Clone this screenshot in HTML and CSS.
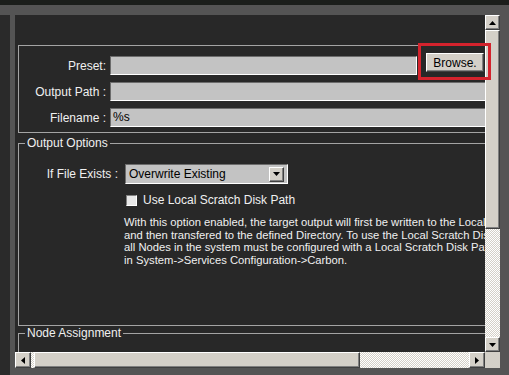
FILE: index.html
```html
<!DOCTYPE html>
<html lang="en">
<head>
    <meta charset="UTF-8">
    <title>Output Settings</title>
    <link rel="stylesheet" href="styles.css">
</head>
<body>
    <div class="topbar"></div>
    <div class="main">
        <div class="side"></div>
        <div class="view">
            <div class="content">
                <div class="group group-file">
                    <div class="row">
                        <label class="lbl">Preset:</label>
                        <div class="field field-preset"></div>
                        <button class="btn-browse">Browse.</button>
                    </div>
                    <div class="row">
                        <label class="lbl">Output Path :</label>
                        <div class="field"></div>
                    </div>
                    <div class="row">
                        <label class="lbl">Filename :</label>
                        <div class="field">%s</div>
                    </div>
                </div>

                <fieldset class="group group-options">
                    <legend>Output Options</legend>
                    <div class="row row-exists">
                        <label class="lbl lbl-wide">If File Exists :</label>
                        <div class="combo">
                            <span class="combo-text">Overwrite Existing</span>
                            <span class="combo-btn">
                                <svg width="7" height="4" viewBox="0 0 7 4"><polygon points="0,0 7,0 3.5,4" fill="#000"/></svg>
                            </span>
                        </div>
                    </div>
                    <div class="check-row">
                        <span class="check"></span>
                        <span>Use Local Scratch Disk Path</span>
                    </div>
                    <p class="note">
                        With this option enabled, the target output will first be written to the Local Disk<br>
                        and then transfered to the defined Directory. To use the Local Scratch Disk Path,<br>
                        all Nodes in the system must be configured with a Local Scratch Disk Path<br>
                        in System-&gt;Services Configuration-&gt;Carbon.
                    </p>
                </fieldset>

                <fieldset class="group group-nodes">
                    <legend>Node Assignment</legend>
                </fieldset>
            </div>

            <div class="vscroll">
                <div class="sb-btn">
                    <svg width="7" height="4" viewBox="0 0 7 4"><polygon points="3.5,0 7,4 0,4" fill="#000"/></svg>
                </div>
                <div class="sb-thumb vthumb"></div>
                <div class="sb-track"></div>
                <div class="sb-btn">
                    <svg width="7" height="4" viewBox="0 0 7 4"><polygon points="0,0 7,0 3.5,4" fill="#000"/></svg>
                </div>
            </div>
            <div class="hscroll">
                <div class="sb-btn hbtn">
                    <svg width="4" height="7" viewBox="0 0 4 7"><polygon points="4,0 4,7 0,3.5" fill="#000"/></svg>
                </div>
                <div class="sb-track hgap"></div>
                <div class="sb-thumb hthumb"></div>
                <div class="sb-track"></div>
                <div class="sb-btn hbtn">
                    <svg width="4" height="7" viewBox="0 0 4 7"><polygon points="0,0 4,3.5 0,7" fill="#000"/></svg>
                </div>
            </div>
            <div class="corner"></div>

            <div class="callout"></div>
        </div>
    </div>
</body>
</html>
```

FILE: styles.css
```css
body {
    margin: 0;
    background-color: #545454;
    font-family: "Liberation Sans", Arial, sans-serif;
    font-size: 12px;
    color: #f0f0f0;
    overflow: hidden;
}
.topbar {
    height: 5px;
    background-color: #1b1e1b;
}
.main {
    display: flex;
    padding-top: 10px;
}
.side {
    width: 10px;
    height: 360px;
    background-color: #2a2a2a;
}
.view {
    position: relative;
    margin-left: 5px;
    display: grid;
    grid-template-columns: 470px 15px;
    grid-template-rows: 337px 16px;
}
.content {
    background-color: #282828;
    overflow: hidden;
}

/* group boxes */
.group {
    width: 600px;
    margin: 0 0 0 3px;
    border: 1px solid #a4a4a4;
    box-sizing: border-box;
}
.group legend {
    margin-left: 6px;
    padding: 0 2px;
    line-height: 12px;
    font-size: 12px;
}
.group-file {
    margin-top: 30px;
    padding: 10px 0 5px 0;
}
.group-options {
    margin-top: 4px;
    padding: 0;
    height: 189px;
}
.group-nodes {
    margin-top: 1px;
    padding: 0;
    height: 60px;
}

.row {
    display: flex;
    align-items: center;
    height: 19px;
    margin-bottom: 7px;
}
.row:last-child {
    margin-bottom: 0;
}
.lbl {
    flex: none;
    width: 87px;
    margin-right: 4px;
    text-align: right;
    white-space: nowrap;
}
.lbl-wide {
    width: 99px;
    margin-right: 7px;
}
.field {
    flex: none;
    width: 480px;
    height: 19px;
    box-sizing: border-box;
    background-color: #c3c3c3;
    border-top: 1px solid #6c6c6c;
    border-left: 1px solid #6c6c6c;
    border-bottom: 1px solid #fff;
    border-right: 1px solid #fff;
    color: #000;
    padding-left: 2px;
    line-height: 17px;
}
.field-preset {
    width: 307px;
}
.btn-browse {
    flex: none;
    align-self: flex-start;
    margin: -3px 0 0 9px;
    width: 58px;
    height: 19px;
    padding: 0;
    background-color: #d4d0c8;
    border: 1px solid;
    border-color: #fff #404040 #404040 #fff;
    box-shadow: inset -1px -1px #808080;
    font-family: "Liberation Sans", Arial, sans-serif;
    font-size: 12px;
    color: #000;
}

/* output options */
.row-exists {
    height: 20px;
    margin: 15px 0 0 0;
}
.combo {
    flex: none;
    display: flex;
    align-items: center;
    justify-content: space-between;
    width: 163px;
    height: 20px;
    box-sizing: border-box;
    background-color: #c3c3c3;
    border-top: 1px solid #6c6c6c;
    border-left: 1px solid #6c6c6c;
    border-bottom: 1px solid #fff;
    border-right: 1px solid #fff;
    padding: 0 3px 0 3px;
    color: #000;
}
.combo-btn {
    display: flex;
    align-items: center;
    justify-content: center;
    width: 15px;
    height: 15px;
    box-sizing: border-box;
    background-color: #d4d0c8;
    border: 1px solid;
    border-color: #fff #404040 #404040 #fff;
    box-shadow: inset -1px -1px #808080;
}
.check-row {
    display: flex;
    align-items: center;
    height: 14px;
    margin-top: 9px;
    padding-left: 107px;
}
.check {
    width: 11px;
    height: 11px;
    box-sizing: border-box;
    margin-right: 6px;
    background-color: #e8e8e8;
    border-top: 1px solid #808080;
    border-left: 1px solid #808080;
    border-bottom: 1px solid #fff;
    border-right: 1px solid #fff;
}
.note {
    margin: 9px 0 0 0;
    padding-left: 105px;
    font-size: 11.25px;
    line-height: 12.5px;
    white-space: nowrap;
}

/* scroll bars */
.vscroll {
    display: flex;
    flex-direction: column;
}
.hscroll {
    display: flex;
}
.sb-btn {
    flex: none;
    display: flex;
    align-items: center;
    justify-content: center;
    width: 15px;
    height: 15px;
    box-sizing: border-box;
    background-color: #d4d0c8;
    border: 1px solid;
    border-color: #fff #404040 #404040 #fff;
    box-shadow: inset -1px -1px #808080;
}
.hbtn {
    width: 16px;
    height: 16px;
}
.sb-thumb {
    flex: none;
    box-sizing: border-box;
    background-color: #d4d0c8;
    border: 1px solid;
    border-color: #fff #404040 #404040 #fff;
    box-shadow: inset -1px -1px #808080;
}
.vthumb {
    height: 199px;
}
.hthumb {
    width: 326px;
}
.sb-track {
    flex: 1;
    background: repeating-conic-gradient(#d4d0c8 0 25%, #fff 0 50%) 0 0 / 2px 2px;
}
.hgap {
    flex: none;
    width: 3px;
}
.corner {
    background-color: #d4d0c8;
}

.callout {
    position: absolute;
    left: 403px;
    top: 28px;
    width: 73px;
    height: 37px;
    box-sizing: border-box;
    border: 3px solid #d4232d;
}
```
